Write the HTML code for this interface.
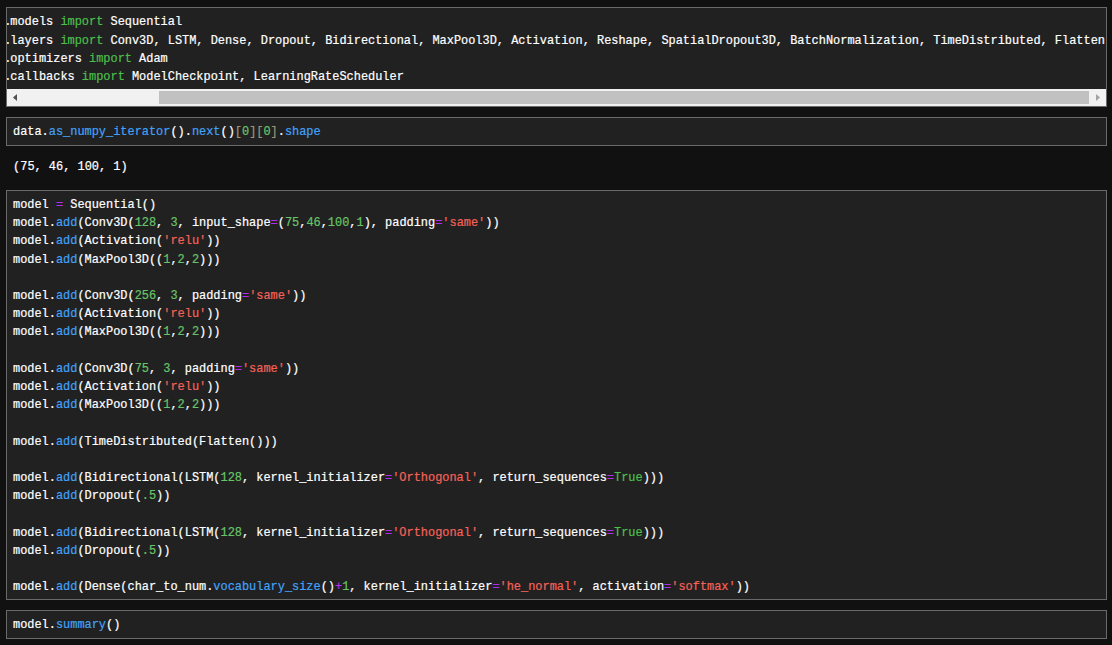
<!DOCTYPE html>
<html><head><meta charset="utf-8">
<style>
html,body{margin:0;padding:0;}
body{width:1112px;height:645px;overflow:hidden;background:#111111;position:relative;font-family:"Liberation Mono",monospace;font-size:11.93px;color:#ffffff;}
.cell{position:absolute;left:6px;width:1099px;border:1px solid #6a6a6a;background:#212121;overflow:hidden;}
pre{-webkit-text-stroke:0.2px currentColor;margin:0;font-family:"Liberation Mono",monospace;font-size:11.93px;line-height:18.2px;white-space:pre;position:absolute;}
.k{color:#4cbf4c}
.f{color:#42a2f8}
.s{color:#f56258}
.o{color:#b22ef0}
.n{color:#68c468}
.b{color:#999977}
#c1{top:7px;height:98px;}
#c1 pre{left:-3.85px;top:5.4px;}
.dot{position:relative;left:1.2px}
.sb{position:absolute;left:0;top:81px;width:1099px;height:17px;background:#f1f1f1;}
.thumb{position:absolute;left:152px;top:2px;width:930px;height:13px;background:#c1c1c1;}
#c2{top:117px;height:27px;}
#c2 pre,#c3 pre,#c4 pre{left:6px;top:5px;}
#out{position:absolute;left:13.1px;top:158px;}
#c3{top:190px;height:408px;}
#c4{top:610px;height:27px;}
</style></head><body>
<div class="cell" id="c1"><pre><span class="dot">.</span>models <span class="k">import</span> Sequential
<span class="dot">.</span>layers <span class="k">import</span> Conv3D, LSTM, Dense, Dropout, Bidirectional, MaxPool3D, Activation, Reshape, SpatialDropout3D, BatchNormalization, TimeDistributed, Flatten
<span class="dot">.</span>optimizers <span class="k">import</span> Adam
<span class="dot">.</span>callbacks <span class="k">import</span> ModelCheckpoint, LearningRateScheduler</pre>
<div class="sb"><div class="thumb"></div>
<svg width="1099" height="17" style="position:absolute;left:0;top:0"><polygon points="10,5 6,8.5 10,12" fill="#505050"/><polygon points="1089,5 1093,8.5 1089,12" fill="#a3a3a3"/></svg>
</div></div>
<div class="cell" id="c2"><pre>data.<span class="f">as_numpy_iterator</span>().<span class="f">next</span>()<span class="b">[</span><span class="n">0</span><span class="b">][</span><span class="n">0</span><span class="b">]</span>.<span class="f">shape</span></pre></div>
<pre id="out">(75, 46, 100, 1)</pre>
<div class="cell" id="c3"><pre>model <span class="o">=</span> Sequential()
model.<span class="f">add</span>(Conv3D(<span class="n">128</span>, <span class="n">3</span>, input_shape<span class="o">=</span>(<span class="n">75</span>,<span class="n">46</span>,<span class="n">100</span>,<span class="n">1</span>), padding<span class="o">=</span><span class="s">'same'</span>))
model.<span class="f">add</span>(Activation(<span class="s">'relu'</span>))
model.<span class="f">add</span>(MaxPool3D((<span class="n">1</span>,<span class="n">2</span>,<span class="n">2</span>)))

model.<span class="f">add</span>(Conv3D(<span class="n">256</span>, <span class="n">3</span>, padding<span class="o">=</span><span class="s">'same'</span>))
model.<span class="f">add</span>(Activation(<span class="s">'relu'</span>))
model.<span class="f">add</span>(MaxPool3D((<span class="n">1</span>,<span class="n">2</span>,<span class="n">2</span>)))

model.<span class="f">add</span>(Conv3D(<span class="n">75</span>, <span class="n">3</span>, padding<span class="o">=</span><span class="s">'same'</span>))
model.<span class="f">add</span>(Activation(<span class="s">'relu'</span>))
model.<span class="f">add</span>(MaxPool3D((<span class="n">1</span>,<span class="n">2</span>,<span class="n">2</span>)))

model.<span class="f">add</span>(TimeDistributed(Flatten()))

model.<span class="f">add</span>(Bidirectional(LSTM(<span class="n">128</span>, kernel_initializer<span class="o">=</span><span class="s">'Orthogonal'</span>, return_sequences<span class="o">=</span><span class="k">True</span>)))
model.<span class="f">add</span>(Dropout(<span class="n">.5</span>))

model.<span class="f">add</span>(Bidirectional(LSTM(<span class="n">128</span>, kernel_initializer<span class="o">=</span><span class="s">'Orthogonal'</span>, return_sequences<span class="o">=</span><span class="k">True</span>)))
model.<span class="f">add</span>(Dropout(<span class="n">.5</span>))

model.<span class="f">add</span>(Dense(char_to_num.<span class="f">vocabulary_size</span>()<span class="o">+</span><span class="n">1</span>, kernel_initializer<span class="o">=</span><span class="s">'he_normal'</span>, activation<span class="o">=</span><span class="s">'softmax'</span>))</pre></div>
<div class="cell" id="c4"><pre>model.<span class="f">summary</span>()</pre></div>
</body></html>
